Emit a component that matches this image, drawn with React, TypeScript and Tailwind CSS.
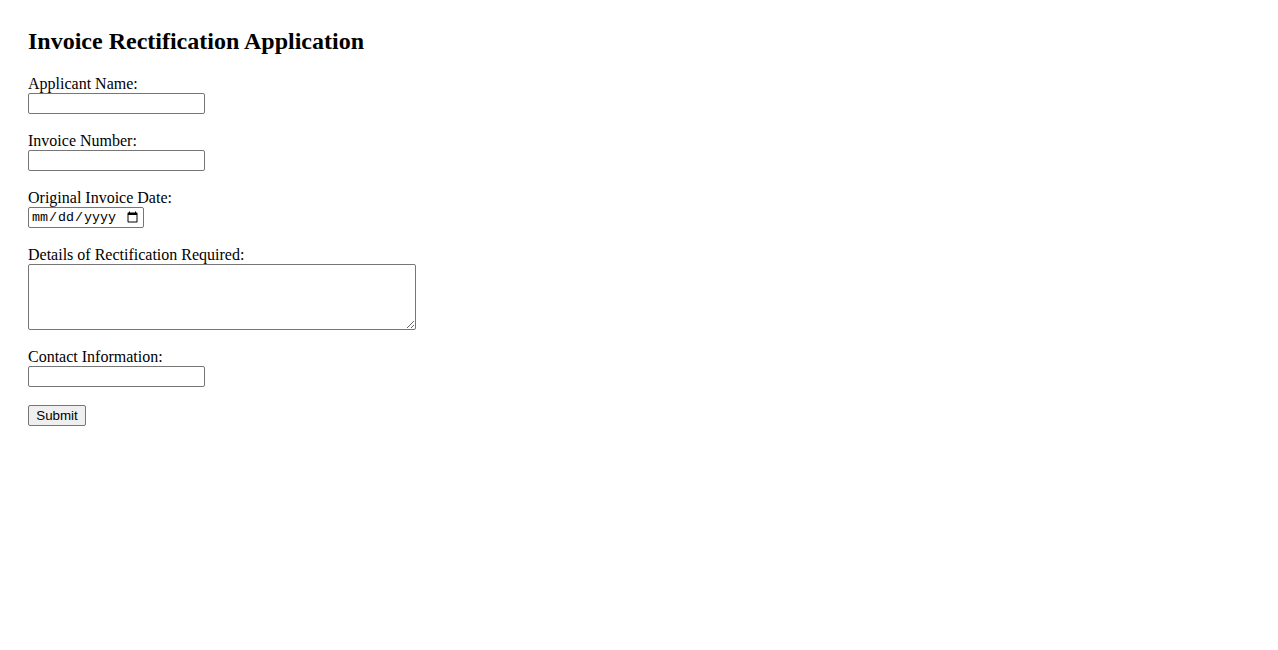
import React from "react";

const fields = [
  { id: "applicantName", label: "Applicant Name:", type: "text" },
  { id: "invoiceNumber", label: "Invoice Number:", type: "text" },
  { id: "invoiceDate", label: "Original Invoice Date:", type: "date" },
];

export default function App() {
  return (
    <div className="min-h-screen bg-white px-[28px] pt-[28px] text-black font-['Liberation_Serif',serif]">
      <h2 className="text-[24px] leading-[26px] font-bold mb-[21px]">
        Invoice Rectification Application
      </h2>
      <form onSubmit={(e) => e.preventDefault()}>
        {fields.map((f) => (
          <div key={f.id} className="mb-[18px]">
            <label htmlFor={f.id} className="block text-[16px] leading-[18px]">
              {f.label}
            </label>
            {f.type === "date" ? (
              <input
                id={f.id}
                type="date"
                className="block w-[116px] h-[21px] border border-[#767676] rounded-[2px] px-[2px] text-[13.33px] font-['Liberation_Mono',monospace]"
              />
            ) : (
              <input
                id={f.id}
                type="text"
                className="block w-[177px] h-[21px] border border-[#767676] rounded-[2px] px-[2px] text-[13.33px] font-['Liberation_Sans',sans-serif]"
              />
            )}
          </div>
        ))}
        <div className="mb-[18px]">
          <label htmlFor="details" className="block text-[16px] leading-[18px]">
            Details of Rectification Required:
          </label>
          <textarea
            id="details"
            className="block w-[388px] h-[66px] border border-[#767676] rounded-[2px] px-[2px] text-[13.33px] font-['Liberation_Mono',monospace]"
          />
        </div>
        <div className="mb-[18px]">
          <label htmlFor="contact" className="block text-[16px] leading-[18px]">
            Contact Information:
          </label>
          <input
            id="contact"
            type="text"
            className="block w-[177px] h-[21px] border border-[#767676] rounded-[2px] px-[2px] text-[13.33px] font-['Liberation_Sans',sans-serif]"
          />
        </div>
        <button
          type="submit"
          className="block w-[58px] h-[21px] bg-[#efefef] border border-[#767676] rounded-[2px] text-[13.33px] leading-[19px] font-['Liberation_Sans',sans-serif]"
        >
          Submit
        </button>
      </form>
    </div>
  );
}
